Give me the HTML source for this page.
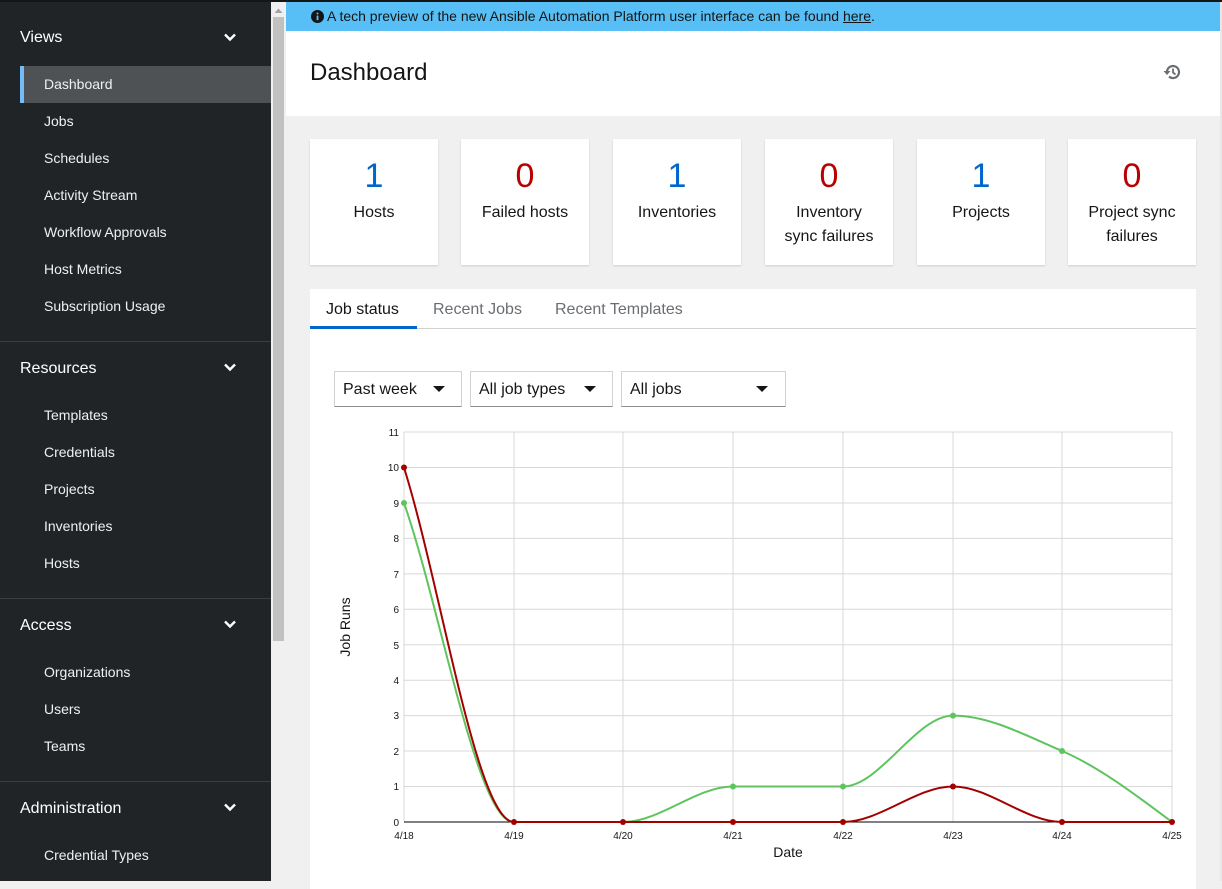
<!DOCTYPE html>
<html><head><meta charset="utf-8"><style>
*{box-sizing:border-box;margin:0;padding:0}
body{width:1222px;height:881px;overflow:hidden;font-family:"Liberation Sans",sans-serif;background:#f0f0f0;position:relative}
.top{position:absolute;left:0;top:0;width:1222px;height:2px;background:#151515}
.side{position:absolute;left:0;top:2px;width:271px;height:879px;background:#212427;color:#fff}
.grp{position:absolute;left:20px;font-size:16px;color:#fff}
.chev{position:absolute;left:224px;width:12px;height:12px}
.it{position:absolute;left:44px;font-size:14px;color:#f0f0f0}
.act{position:absolute;left:20px;top:64px;width:251px;height:37px;background:#4f5255;border-left:4px solid #73bcf7}
.sep{position:absolute;left:0;width:271px;height:1px;background:#3c3f42}
.sb{position:absolute;left:271px;top:2px;width:15px;height:879px;background:#f0f0f0}
.thumb{position:absolute;left:273px;top:17px;width:11px;height:624px;background:#c1c1c1}
.banner{position:absolute;left:286px;top:2px;width:934px;height:29px;background:#57bff5;font-size:14px;color:#151515;padding:6px 0 0 25px}
.hdr{position:absolute;left:286px;top:31px;width:934px;height:85px;background:#fff}
.card{position:absolute;top:139px;width:128px;height:126px;background:#fff;box-shadow:0 1px 2px rgba(0,0,0,.15);text-align:center}
.card .n{font-size:34px;margin-top:18px;height:44px;font-weight:300}
.card .l{font-size:16px;color:#151515;line-height:24px;margin-top:0}
.blue{color:#0066cc}.red{color:#b80000}
.panel{position:absolute;left:310px;top:289px;width:886px;height:600px;background:#fff}
.tab{position:absolute;top:12px;font-size:16px;color:#6a6e73}
.sel{position:absolute;top:82px;height:36px;border:1px solid #d2d2d2;border-bottom-color:#8a8d90;font-size:16px;color:#151515;padding:9px 0 0 8px}
.caret{position:absolute;top:14px;width:0;height:0;border-left:6px solid transparent;border-right:6px solid transparent;border-top:6px solid #151515}
</style></head><body>
<div class="top"></div>
<div class="side">
<div class="grp" style="top:27px">Views</div>
<svg class="chev" style="top:29px" viewBox="0 0 12 12"><path d="M1 3.5L6 8.5L11 3.5" stroke="#fff" stroke-width="2.4" fill="none"/></svg>
<div class="act"></div>
<div class="it" style="top:74px">Dashboard</div>
<div class="it" style="top:111px">Jobs</div>
<div class="it" style="top:148px">Schedules</div>
<div class="it" style="top:185px">Activity Stream</div>
<div class="it" style="top:222px">Workflow Approvals</div>
<div class="it" style="top:259px">Host Metrics</div>
<div class="it" style="top:296px">Subscription Usage</div>
<div class="sep" style="top:339px"></div>
<div class="grp" style="top:358px">Resources</div>
<svg class="chev" style="top:359px" viewBox="0 0 12 12"><path d="M1 3.5L6 8.5L11 3.5" stroke="#fff" stroke-width="2.4" fill="none"/></svg>
<div class="it" style="top:405px">Templates</div>
<div class="it" style="top:442px">Credentials</div>
<div class="it" style="top:479px">Projects</div>
<div class="it" style="top:516px">Inventories</div>
<div class="it" style="top:553px">Hosts</div>
<div class="sep" style="top:596px"></div>
<div class="grp" style="top:615px">Access</div>
<svg class="chev" style="top:616px" viewBox="0 0 12 12"><path d="M1 3.5L6 8.5L11 3.5" stroke="#fff" stroke-width="2.4" fill="none"/></svg>
<div class="it" style="top:662px">Organizations</div>
<div class="it" style="top:699px">Users</div>
<div class="it" style="top:736px">Teams</div>
<div class="sep" style="top:779px"></div>
<div class="grp" style="top:798px">Administration</div>
<svg class="chev" style="top:799px" viewBox="0 0 12 12"><path d="M1 3.5L6 8.5L11 3.5" stroke="#fff" stroke-width="2.4" fill="none"/></svg>
<div class="it" style="top:845px">Credential Types</div>
</div>
<div class="sb"></div><div class="thumb"></div>
<svg style="position:absolute;left:274px;top:8px" width="9" height="6"><path d="M0.5 5L4.5 0.5L8.5 5Z" fill="#a3a3a3"/></svg>
<div class="banner"><svg width="13" height="13" viewBox="0 0 14 14" style="position:absolute;left:25px;top:8px"><circle cx="7" cy="7" r="7" fill="#151515"/><rect x="6" y="6" width="2" height="5" fill="#57bff5"/><circle cx="7" cy="3.8" r="1.1" fill="#57bff5"/></svg><span style="margin-left:16px">A tech preview of the new Ansible Automation Platform user interface can be found <u>here</u>.</span></div>
<div class="hdr"><div style="position:absolute;left:24px;top:28px;font-size:24px;color:#151515">Dashboard</div>
<svg style="position:absolute;left:877px;top:32px" width="18" height="18" viewBox="0 0 18 18"><path d="M4 9A6 6 0 1 1 6 13.5" stroke="#6a6e73" stroke-width="2.2" fill="none"/><path d="M0.5 8L4 12L7.5 8Z" fill="#6a6e73"/><path d="M10 5.5V9.5L12.5 11.5" stroke="#6a6e73" stroke-width="1.8" fill="none"/></svg></div>
<div style="position:absolute;left:1220px;top:2px;width:2px;height:879px;background:#e8e8e8"></div>
<div class="card" style="left:310px"><div class="n blue">1</div><div class="l">Hosts</div></div>
<div class="card" style="left:461px"><div class="n red">0</div><div class="l">Failed hosts</div></div>
<div class="card" style="left:613px"><div class="n blue">1</div><div class="l">Inventories</div></div>
<div class="card" style="left:765px"><div class="n red">0</div><div class="l">Inventory<br>sync failures</div></div>
<div class="card" style="left:917px"><div class="n blue">1</div><div class="l">Projects</div></div>
<div class="card" style="left:1068px"><div class="n red">0</div><div class="l">Project sync<br>failures</div></div>
<div class="panel">
<div class="tab" style="left:16px;color:#151515">Job status</div>
<div class="tab" style="left:123px">Recent Jobs</div>
<div class="tab" style="left:245px">Recent Templates</div>
<div style="position:absolute;left:0;top:39px;width:886px;height:1px;background:#d2d2d2"></div>
<div style="position:absolute;left:0;top:37px;width:107px;height:3px;background:#0066cc"></div>
<div class="sel" style="left:24px;width:128px">Past week<div class="caret" style="left:98px"></div></div>
<div class="sel" style="left:160px;width:143px">All job types<div class="caret" style="left:113px"></div></div>
<div class="sel" style="left:311px;width:165px">All jobs<div class="caret" style="left:134px"></div></div>
</div>
<svg style="position:absolute;left:0;top:0" width="1222" height="881" font-family="Liberation Sans, sans-serif">
<g stroke="#d8d8d8" stroke-width="1">
<line x1="404" y1="432" x2="1172" y2="432"/><line x1="404" y1="467.5" x2="1172" y2="467.5"/><line x1="404" y1="503" x2="1172" y2="503"/><line x1="404" y1="538.4" x2="1172" y2="538.4"/><line x1="404" y1="573.9" x2="1172" y2="573.9"/><line x1="404" y1="609.3" x2="1172" y2="609.3"/><line x1="404" y1="644.8" x2="1172" y2="644.8"/><line x1="404" y1="680.2" x2="1172" y2="680.2"/><line x1="404" y1="715.6" x2="1172" y2="715.6"/><line x1="404" y1="751" x2="1172" y2="751"/><line x1="404" y1="786.5" x2="1172" y2="786.5"/>
<line x1="404" y1="432" x2="404" y2="822"/><line x1="514" y1="432" x2="514" y2="822"/><line x1="623" y1="432" x2="623" y2="822"/><line x1="733" y1="432" x2="733" y2="822"/><line x1="843" y1="432" x2="843" y2="822"/><line x1="953" y1="432" x2="953" y2="822"/><line x1="1062" y1="432" x2="1062" y2="822"/><line x1="1172" y1="432" x2="1172" y2="822"/>
</g>
<line x1="404" y1="822" x2="1172" y2="822" stroke="#000"/>
<g font-size="10" fill="#151515" text-anchor="end">
<text x="399" y="436">11</text><text x="399" y="471">10</text><text x="399" y="507">9</text><text x="399" y="542">8</text><text x="399" y="578">7</text><text x="399" y="613">6</text><text x="399" y="649">5</text><text x="399" y="684">4</text><text x="399" y="719">3</text><text x="399" y="755">2</text><text x="399" y="790">1</text><text x="399" y="826">0</text>
</g>
<g font-size="10" fill="#151515" text-anchor="middle">
<text x="404" y="839">4/18</text><text x="514" y="839">4/19</text><text x="623" y="839">4/20</text><text x="733" y="839">4/21</text><text x="843" y="839">4/22</text><text x="953" y="839">4/23</text><text x="1062" y="839">4/24</text><text x="1172" y="839">4/25</text>
</g>
<text x="788" y="857" font-size="14" text-anchor="middle" fill="#151515">Date</text>
<text transform="translate(350,627) rotate(-90)" font-size="14" text-anchor="middle" fill="#151515">Job Runs</text>
<path d="M404 503C441 609 477 822 514 822L623 822C660 822 696 786.5 733 786.5L843 786.5C880 786.5 916 715.6 953 715.6C989.6 715.6 1025.3 735.3 1062 751C1098.6 766.7 1135.3 794.5 1172 822" stroke="#5ec45e" stroke-width="2" fill="none"/>
<g fill="#5ec45e"><circle cx="404" cy="503" r="3"/><circle cx="733" cy="786.5" r="3"/><circle cx="843" cy="786.5" r="3"/><circle cx="953" cy="715.6" r="3"/><circle cx="1062" cy="751" r="3"/></g>
<path d="M404 467.5C441 586 477 822 514 822L843 822C880 822 916 786.5 953 786.5C989.6 786.5 1025.3 822 1062 822L1172 822" stroke="#a30000" stroke-width="2" fill="none"/>
<g fill="#a30000"><circle cx="404" cy="467.5" r="3"/><circle cx="514" cy="822" r="3"/><circle cx="623" cy="822" r="3"/><circle cx="733" cy="822" r="3"/><circle cx="843" cy="822" r="3"/><circle cx="953" cy="786.5" r="3"/><circle cx="1062" cy="822" r="3"/><circle cx="1172" cy="822" r="3"/></g>
</svg>
</body></html>
